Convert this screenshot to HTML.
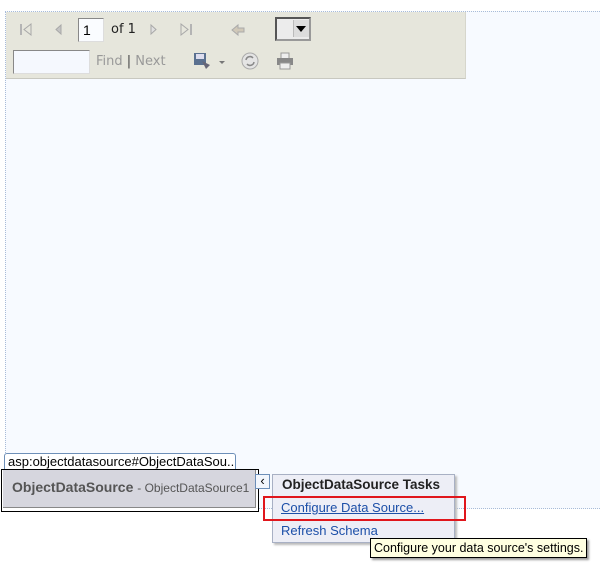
<!DOCTYPE html>
<html><head><style>
body{margin:0;width:600px;height:583px;background:#fff;position:relative;overflow:hidden;font-family:"Liberation Sans",sans-serif;}
.a{position:absolute;}
</style></head><body>
<div class="a" style="left:5px;top:11px;width:600px;height:496px;border-top:1px dotted #a9bcd8;border-left:1px dotted #a9bcd8;border-bottom:1px dotted #a9bcd8;background:#f7faff;"></div>
<div class="a" style="left:6px;top:12px;width:459px;height:66px;background:#e6e6dc;border-bottom:1px solid #c8c8c0;border-right:1px solid #d6d6cc;"></div>
<svg class="a" style="left:18px;top:22px" width="16" height="16"><rect x="2" y="2" width="2" height="11" fill="#b4b4b4"/><path d="M13 2 L6 7.5 L13 13Z" fill="none" stroke="#a8a8a8"/></svg>
<svg class="a" style="left:52px;top:22px" width="12" height="16"><path d="M9 3 L4 7.5 L9 12Z" fill="#c4c4c4" stroke="#a8a8a8"/></svg>
<div class="a" style="left:78px;top:18px;width:26px;height:24px;background:#fafcff;border:1px solid #888;border-right-color:#ddd;border-bottom-color:#ddd;font-size:14px;line-height:22px;padding-left:4px;box-sizing:border-box;color:#000;">1</div>
<div class="a" style="left:111px;top:22px;color:#222;font-family:'DejaVu Sans',sans-serif;font-size:13px;">of 1</div>
<svg class="a" style="left:148px;top:22px" width="12" height="16"><path d="M3 3 L8 7.5 L3 12Z" fill="#e0e0e0" stroke="#a8a8a8"/></svg>
<svg class="a" style="left:178px;top:22px" width="18" height="16"><path d="M3 2 L10 7.5 L3 13Z" fill="none" stroke="#a8a8a8"/><rect x="12" y="2" width="2" height="11" fill="#b4b4b4"/></svg>
<svg class="a" style="left:230px;top:23px" width="16" height="14"><path d="M2 7 L8 2 L8 5 L14 5 L14 9 L8 9 L8 12Z" fill="#d0c8b8" stroke="#aaa"/></svg>
<div class="a" style="left:275px;top:17px;width:36px;height:24px;border:2px solid #555;border-right-color:#999;border-bottom-color:#999;box-sizing:border-box;background:#ececec;"></div>
<div class="a" style="left:293px;top:20px;width:15px;height:17px;background:#ddd;border-left:1px solid #bbb;"></div>
<svg class="a" style="left:294px;top:25px" width="14" height="8"><path d="M2 1 L12 1 L7 7Z" fill="#000"/></svg>
<div class="a" style="left:13px;top:50px;width:77px;height:24px;background:#f5f8fe;border:1px solid #888;border-right-color:#ddd;border-bottom-color:#ddd;box-sizing:border-box;"></div>
<div class="a" style="left:96px;top:54px;font-size:13px;color:#999;font-family:'DejaVu Sans',sans-serif;">Find <span style="color:#444">|</span> Next</div>
<svg class="a" style="left:192px;top:51px" width="34" height="20"><rect x="2" y="2" width="12" height="12" fill="#5a7090"/><rect x="4" y="3" width="8" height="5" fill="#dde"/><path d="M10 10 L18 14 L14 18Z" fill="#667"/><path d="M27 10 L33 10 L30 13Z" fill="#777"/></svg>
<svg class="a" style="left:240px;top:51px" width="20" height="20"><circle cx="10" cy="10" r="8" fill="#e4e4e4" stroke="#aaa"/><path d="M6 9 A4 4 0 0 1 13 7 M14 11 A4 4 0 0 1 7 13" stroke="#888" fill="none" stroke-width="1.5"/></svg>
<svg class="a" style="left:275px;top:51px" width="20" height="20"><rect x="6" y="2" width="8" height="6" fill="#eee" stroke="#999"/><rect x="2" y="7" width="16" height="7" fill="#888"/><rect x="5" y="12" width="10" height="6" fill="#eee" stroke="#999"/></svg>
<div class="a" style="left:4px;top:453px;width:232px;height:16px;border:1px solid #6d8fb8;border-bottom:none;border-radius:3px 3px 0 0;background:#fff;font-size:13px;line-height:16px;padding-left:3px;box-sizing:border-box;color:#000;white-space:nowrap;overflow:hidden;">asp:objectdatasource#ObjectDataSou...</div>
<div class="a" style="left:1px;top:469px;width:258px;height:43px;border:1px solid #000;box-sizing:border-box;background:#fff;"></div>
<div class="a" style="left:3px;top:470px;width:252px;height:37px;background:#d6d6de;border-right:1px solid #888;border-bottom:1px solid #888;"></div>
<div class="a" style="left:12px;top:479px;font-size:14px;color:#555;white-space:nowrap;"><b>ObjectDataSource</b> <span style="font-size:12px">- ObjectDataSource1</span></div>
<div class="a" style="left:255px;top:474px;width:15px;height:15px;border:1px solid #6d8fb8;box-sizing:border-box;background:#f2f6fc;font-size:13px;line-height:12px;text-align:center;color:#000;">‹</div>
<div class="a" style="left:272px;top:474px;width:183px;height:69px;background:#edeef6;border:1px solid #a8b0c4;box-sizing:border-box;box-shadow:2px 2px 2px #bbb;"></div>
<div class="a" style="left:282px;top:477px;font-size:13.5px;font-weight:bold;color:#222;white-space:nowrap;">ObjectDataSource Tasks</div>
<div class="a" style="left:281px;top:500px;font-size:13px;color:#1c4fa8;text-decoration:underline;white-space:nowrap;">Configure Data Source...</div>
<div class="a" style="left:281px;top:523px;font-size:13px;color:#1c4fa8;white-space:nowrap;">Refresh Schema</div>
<div class="a" style="left:263px;top:496px;width:203px;height:25px;border:2px solid #e0161c;box-sizing:border-box;"></div>
<div class="a" style="left:370px;top:538px;width:217px;height:20px;background:#ffffe1;border:1px solid #000;box-sizing:border-box;font-size:12.5px;line-height:18px;padding-left:3px;color:#000;white-space:nowrap;box-shadow:2px 2px 2px #999;">Configure your data source's settings.</div>
</body></html>
